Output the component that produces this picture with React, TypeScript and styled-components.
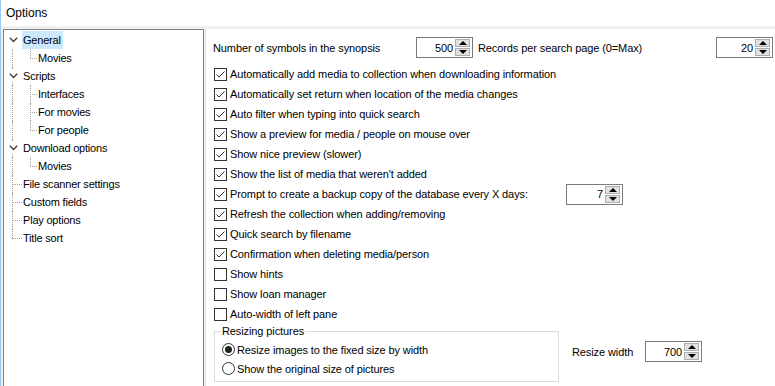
import React from 'react';
import styled, { createGlobalStyle } from 'styled-components';

const GlobalStyle = createGlobalStyle`
  html, body { margin: 0; padding: 0; background: #f0f0f0; }
  body { font-family: "Liberation Sans", Arial, sans-serif; }
  * { box-sizing: border-box; }
`;

const Window = styled.div`
  width: 775px;
  height: 386px;
  overflow: hidden;
  display: flex;
  flex-direction: column;
  background: #f0f0f0;
  border-left: 1px solid #99c9ef;
`;

const TitleBar = styled.div`
  height: 26px;
  flex: none;
  background: #fff;
  display: flex;
  align-items: center;
  padding-left: 5px;
  font-family: "Liberation Sans", Arial, sans-serif;
  font-size: 12px;
  color: #000;
`;

const Body = styled.div`
  flex: 1;
  display: flex;
  gap: 1px;
  padding: 3px 0 0 2px;
  min-height: 0;
`;

const TreePanel = styled.div`
  width: 201px;
  flex: none;
  background: #fff;
  border: 1px solid #828282;
  border-bottom: none;
  padding-top: 1px;
  font-family: "Liberation Sans", Arial, sans-serif;
  font-size: 11px;
  letter-spacing: -0.2px;
  color: #000;
`;

const TreeRow = styled.div`
  display: flex;
  height: 18px;
`;

const Guide = styled.span<{ $w: number; $x: number; $v: 'none' | 'full' | 'top'; $h?: boolean }>`
  position: relative;
  flex: none;
  width: ${(p) => p.$w}px;
  height: 18px;
  display: flex;
  align-items: center;
  justify-content: flex-start;
  &::before {
    content: '';
    display: ${(p) => (p.$v === 'none' ? 'none' : 'block')};
    position: absolute;
    left: ${(p) => p.$x}px;
    top: 0;
    height: ${(p) => (p.$v === 'full' ? 18 : 9)}px;
    border-left: 1px dotted #a0a0a0;
  }
  &::after {
    content: '';
    display: ${(p) => (p.$h ? 'block' : 'none')};
    position: absolute;
    left: ${(p) => p.$x}px;
    top: 9px;
    width: ${(p) => p.$w - p.$x}px;
    border-top: 1px dotted #a0a0a0;
  }
`;

const Chevron = styled.span`
  position: relative;
  z-index: 1;
  margin-left: 4px;
  width: 10px;
  height: 12px;
  background: #fff;
  display: flex;
  align-items: center;
  justify-content: center;
`;

const TreeLabel = styled.span<{ $selected?: boolean }>`
  height: 18px;
  line-height: 18px;
  padding: 0 2px 0 1px;
  white-space: nowrap;
  background: ${(p) => (p.$selected ? '#cce8ff' : 'transparent')};
`;

const Content = styled.div`
  flex: 1;
  background: #fff;
  border-left: 1px solid #e3e3e3;
  padding: 8px 2px 0 7px;
  font-size: 11px;
  letter-spacing: -0.1px;
  color: #000;
  display: flex;
  flex-direction: column;
`;

const TopRow = styled.div`
  display: flex;
  align-items: center;
  height: 21px;
  white-space: nowrap;
`;

const FieldLabel = styled.span<{ $w?: number }>`
  flex: none;
  white-space: nowrap;
  width: ${(p) => (p.$w ? `${p.$w}px` : 'auto')};
`;

const Gap = styled.span<{ $w: number }>`
  flex: none;
  width: ${(p) => p.$w}px;
`;

const Push = styled.span`
  flex: 1;
`;

const SpinBox = styled.div`
  flex: none;
  width: 57px;
  height: 21px;
  border: 1px solid #7a7a7a;
  background: #fff;
  display: flex;
  align-items: center;
  padding: 0 2px 0 2px;
`;

const SpinValue = styled.span`
  flex: 1;
  text-align: right;
  padding-right: 2px;
`;

const SpinButtons = styled.span`
  flex: none;
  width: 15px;
  height: 17px;
  display: flex;
  flex-direction: column;
  gap: 1px;
`;

const SpinHalf = styled.span<{ $dir: 'up' | 'down' }>`
  flex: 1;
  background: #e1e1e1;
  border: 1px solid #adadad;
  display: flex;
  align-items: center;
  justify-content: center;
  &::before {
    content: '';
    width: 0;
    height: 0;
    border-left: 4px solid transparent;
    border-right: 4px solid transparent;
    ${(p) => (p.$dir === 'up' ? 'border-bottom: 4px solid #000;' : 'border-top: 4px solid #000;')}
  }
`;

const CheckList = styled.div`
  margin-top: 6px;
  display: flex;
  flex-direction: column;
`;

const CheckRow = styled.label`
  display: flex;
  align-items: center;
  height: 20px;
  padding-left: 1px;
  gap: 3px;
  white-space: nowrap;
`;

const Box = styled.span`
  flex: none;
  width: 13px;
  height: 13px;
  border: 1px solid #333;
  background: #fff;
  display: flex;
  align-items: center;
  justify-content: center;
`;

const GroupRow = styled.div`
  margin-top: 1px;
  display: flex;
  align-items: flex-start;
`;

const Group = styled.fieldset`
  flex: none;
  width: 345px;
  margin: 0 0 0 1px;
  padding: 2px 0 3px 7px;
  border: 1px solid #dcdcdc;
  min-width: 0;
`;

const Legend = styled.legend`
  padding: 0 1px;
  margin-left: -1px;
  line-height: 13px;
  font-size: 11px;
`;

const RadioRow = styled.label`
  display: flex;
  align-items: center;
  height: 19px;
  gap: 2px;
  white-space: nowrap;
`;

const Radio = styled.span<{ $on?: boolean }>`
  flex: none;
  width: 13px;
  height: 13px;
  border-radius: 50%;
  border: 1px solid #333;
  background: #fff;
  display: flex;
  align-items: center;
  justify-content: center;
  &::before {
    content: '';
    display: ${(p) => (p.$on ? 'block' : 'none')};
    width: 7px;
    height: 7px;
    border-radius: 50%;
    background: #222;
  }
`;

const SideField = styled.div`
  margin-left: 13px;
  margin-top: 16px;
  display: flex;
  align-items: center;
`;

type TreeItem = {
  label: string;
  chevron?: boolean;
  c1: 'none' | 'full' | 'top';
  h1?: boolean;
  c2?: 'full' | 'top';
  selected?: boolean;
};

const tree: TreeItem[] = [
  { label: 'General', chevron: true, c1: 'none', selected: true },
  { label: 'Movies', c1: 'full', c2: 'top' },
  { label: 'Scripts', chevron: true, c1: 'full' },
  { label: 'Interfaces', c1: 'full', c2: 'full' },
  { label: 'For movies', c1: 'full', c2: 'full' },
  { label: 'For people', c1: 'full', c2: 'top' },
  { label: 'Download options', chevron: true, c1: 'full' },
  { label: 'Movies', c1: 'full', c2: 'top' },
  { label: 'File scanner settings', c1: 'full', h1: true },
  { label: 'Custom fields', c1: 'full', h1: true },
  { label: 'Play options', c1: 'full', h1: true },
  { label: 'Title sort', c1: 'top', h1: true },
];

const checks: { label: string; on: boolean; spin?: string }[] = [
  { label: 'Automatically add media to collection when downloading information', on: true },
  { label: 'Automatically set return when location of the media changes', on: true },
  { label: 'Auto filter when typing into quick search', on: true },
  { label: 'Show a preview for media / people on mouse over', on: true },
  { label: 'Show nice preview (slower)', on: true },
  { label: "Show the list of media that weren't added", on: true },
  { label: 'Prompt to create a backup copy of the database every X days:', on: true, spin: '7' },
  { label: 'Refresh the collection when adding/removing', on: true },
  { label: 'Quick search by filename', on: true },
  { label: 'Confirmation when deleting media/person', on: true },
  { label: 'Show hints', on: false },
  { label: 'Show loan manager', on: false },
  { label: 'Auto-width of left pane', on: false },
];

const Spin = ({ value }: { value: string }) => (
  <SpinBox>
    <SpinValue>{value}</SpinValue>
    <SpinButtons>
      <SpinHalf $dir="up" />
      <SpinHalf $dir="down" />
    </SpinButtons>
  </SpinBox>
);

const CheckIcon = () => (
  <svg width="11" height="11" viewBox="0 0 11 11">
    <path d="M1.5 5.5 L4 8 L9.5 2.5" fill="none" stroke="#333" strokeWidth="1" />
  </svg>
);

const ChevronIcon = () => (
  <svg width="9" height="6" viewBox="0 0 9 6">
    <path d="M0.8 0.8 L4.5 4.5 L8.2 0.8" fill="none" stroke="#404040" strokeWidth="1.4" />
  </svg>
);

export default function App() {
  return (
    <>
      <GlobalStyle />
      <Window>
        <TitleBar>Options</TitleBar>
        <Body>
          <TreePanel>
            {tree.map((t, i) => (
              <TreeRow key={i}>
                <Guide $w={18} $x={8} $v={t.c1} $h={t.h1}>
                  {t.chevron && (
                    <Chevron>
                      <ChevronIcon />
                    </Chevron>
                  )}
                </Guide>
                {t.c2 && <Guide $w={15} $x={8} $v={t.c2} $h />}
                <TreeLabel $selected={t.selected}>{t.label}</TreeLabel>
              </TreeRow>
            ))}
          </TreePanel>
          <Content>
            <TopRow>
              <FieldLabel $w={203}>Number of symbols in the synopsis</FieldLabel>
              <Spin value="500" />
              <Gap $w={5} />
              <FieldLabel>Records per search page (0=Max)</FieldLabel>
              <Push />
              <Spin value="20" />
            </TopRow>
            <CheckList>
              {checks.map((c, i) => (
                <CheckRow key={i}>
                  <Box>{c.on && <CheckIcon />}</Box>
                  <FieldLabel $w={c.spin ? 333 : undefined}>{c.label}</FieldLabel>
                  {c.spin && <Spin value={c.spin} />}
                </CheckRow>
              ))}
            </CheckList>
            <GroupRow>
              <Group>
                <Legend>Resizing pictures</Legend>
                <RadioRow>
                  <Radio $on />
                  Resize images to the fixed size by width
                </RadioRow>
                <RadioRow>
                  <Radio />
                  Show the original size of pictures
                </RadioRow>
              </Group>
              <SideField>
                <FieldLabel $w={73}>Resize width</FieldLabel>
                <Spin value="700" />
              </SideField>
            </GroupRow>
          </Content>
        </Body>
      </Window>
    </>
  );
}
